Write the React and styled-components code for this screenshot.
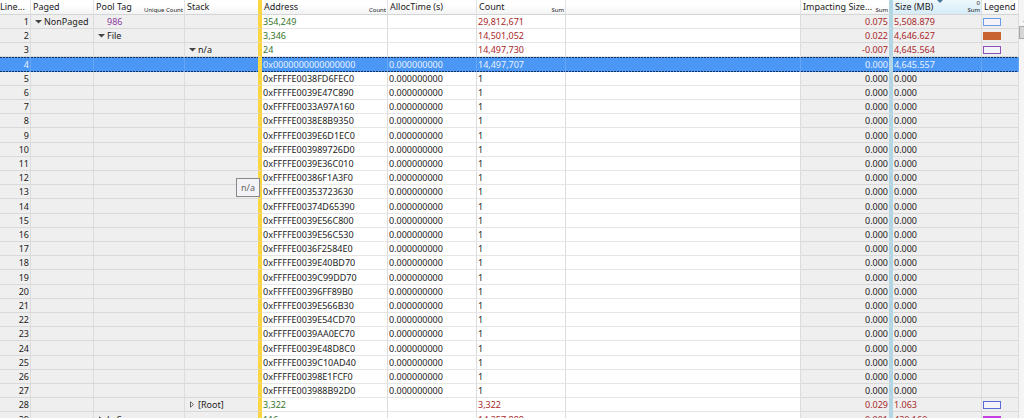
import styled, { createGlobalStyle } from 'styled-components'

const addresses = [
  '0xFFFFE0038FD6FEC0', '0xFFFFE0039E47C890', '0xFFFFE0033A97A160', '0xFFFFE0038E8B9350',
  '0xFFFFE0039E6D1EC0', '0xFFFFE003989726D0', '0xFFFFE0039E36C010', '0xFFFFE00386F1A3F0',
  '0xFFFFE00353723630', '0xFFFFE00374D65390', '0xFFFFE0039E56C800', '0xFFFFE0039E56C530',
  '0xFFFFE0036F2584E0', '0xFFFFE0039E40BD70', '0xFFFFE0039C99DD70', '0xFFFFE00396FF89B0',
  '0xFFFFE0039E566B30', '0xFFFFE0039E54CD70', '0xFFFFE0039AA0EC70', '0xFFFFE0039E48D8C0',
  '0xFFFFE0039C10AD40', '0xFFFFE00398E1FCF0', '0xFFFFE003988B92D0',
]

const rows = [
  { paged: 'NonPaged', open: true, uniqueTags: '986', address: '354,249', count: '29,812,671', impact: '0.075', size: '5,508.879', legend: '#6a9ce4', total: true },
  { pool: 'File', open: true, address: '3,346', count: '14,501,052', impact: '0.022', size: '4,646.627', legend: '#c8642f', filled: true, total: true },
  { stack: 'n/a', open: true, address: '24', count: '14,497,730', impact: '-0.007', size: '4,645.564', legend: '#8d52b8', total: true },
  { address: '0x0000000000000000', time: '0.000000000', count: '14,497,707', impact: '0.000', size: '4,645.557', selected: true },
  ...addresses.map((address) => ({ address, time: '0.000000000', count: '1', impact: '0.000', size: '0.000' })),
  { stack: '[Root]', address: '3,322', count: '3,322', impact: '0.029', size: '1.063', legend: '#596bd9', total: true },
  { pool: 'LeS', address: '116', count: '14,357,888', impact: '0.001', size: '430.160', legend: '#c23fe0', filled: true, total: true },
]

const TreeLabel = ({ open, children }) => (
  <Node>
    <Toggle type='button' aria-label={open ? 'Collapse' : 'Expand'} aria-expanded={!!open}>
      <svg width='7' height='7' viewBox='0 0 7 7'>
        {open
          ? <path d='M0 2h7L3.500 5.500z' fill='#444' />
          : <path d='M1.500 0.800v5.400L4.500 3.500z' fill='#fff' stroke='#555' strokeWidth='0.900' />}
      </svg>
    </Toggle>
    {children}
  </Node>
)

const Row = ({ row, line }) => (
  <Line $selected={row.selected} aria-selected={!!row.selected}>
    <Cell $shaded $right>{line}</Cell>
    <Cell $shaded>{row.paged && <TreeLabel open={row.open}>{row.paged}</TreeLabel>}</Cell>
    <Cell $shaded>
      {row.pool && <TreeLabel open={row.open}>{row.pool}</TreeLabel>}
      {row.uniqueTags && <Unique>{row.uniqueTags}</Unique>}
    </Cell>
    <Cell $shaded $bar='#fad643'>{row.stack && <TreeLabel open={row.open}>{row.stack}</TreeLabel>}</Cell>
    <Cell $color={row.total && '#35752a'}>{row.address}</Cell>
    <Cell>{row.time}</Cell>
    <Cell $color={row.total && '#a8282a'}>{row.count}</Cell>
    <Cell />
    <Cell $shaded $right $color={row.total && '#a8282a'} $bar='#b3d6e4'>{row.impact}</Cell>
    <Cell $shaded $color={row.total && '#a8282a'}>{row.size}</Cell>
    <Cell $shaded>{row.legend && <Swatch $color={row.legend} $filled={row.filled} />}</Cell>
  </Line>
)

const Heading = ({ title, note, order, ...rest }) => (
  <HeadCell scope='col' {...rest}>
    <HeadContent>
      <Title>{title}</Title>
      {note && <Note>{order && <span>{order}</span>}<span>{note}</span></Note>}
    </HeadContent>
    {rest.$sorted && <SortMark width='6' height='3' viewBox='0 0 6 3'><path d='M0 0h6L3 3z' fill='#47799a' /></SortMark>}
  </HeadCell>
)

const App = () => (
  <>
    <GlobalStyle />
    <Viewer>
      <Table>
        <colgroup>
          <Col $w={31} />
          <Col $w={63} />
          <Col $w={91} />
          <Col $w={77} />
          <Col $w={126} />
          <Col $w={89} />
          <Col $w={89} />
          <col />
          <Col $w={92} />
          <Col $w={89} />
          <Col $w={37} />
        </colgroup>
        <thead>
          <tr>
            <Heading title='Line...' $flush />
            <Heading title='Paged' />
            <Heading title='Pool Tag' note='Unique Count' />
            <Heading title='Stack' $bar='#fad643' />
            <Heading title='Address' note='Count' />
            <Heading title='AllocTime (s)' />
            <Heading title='Count' note='Sum' />
            <Heading title='' />
            <Heading title='Impacting Size...' note='Sum' $bar='#b3d6e4' />
            <Heading title='Size (MB)' note='Sum' order='0' $sorted />
            <Heading title='Legend' />
          </tr>
        </thead>
        <tbody>
          {rows.map((row, i) => <Row key={row.address} row={row} line={i + 1} />)}
        </tbody>
      </Table>
      <Scrollbar>
        <ScrollUp type='button' aria-label='Scroll up'>
          <svg width='8' height='4' viewBox='0 0 8 4'><path d='M0 4L4 0l4 4z' fill='#777' /></svg>
        </ScrollUp>
        <Thumb />
      </Scrollbar>
      <Tooltip role='tooltip'>n/a</Tooltip>
    </Viewer>
  </>
)
export default App

const GlobalStyle = createGlobalStyle`
  *{
    box-sizing: border-box;
  }
  body{
    margin: 0;
    overflow: hidden;
    background: #fff;
    color: #222;
    font-family: "Noto Sans", "Open Sans", sans-serif;
    font-size: 9px;
  }
`

const Viewer = styled.main`
  position: relative;
  display: flex;
  height: 100vh;
  overflow: hidden;
`

const Table = styled.table`
  flex: 1;
  min-width: 0;
  align-self: flex-start;
  table-layout: fixed;
  border-collapse: separate;
  border-spacing: 0;
`

const Col = styled.col`
  width: ${props => props.$w}px;
`

const HeadCell = styled.th`
  position: relative;
  height: 15px;
  padding: ${props => props.$flush ? '0' : '0 1px 0 2px'};
  background: ${props => props.$sorted ? 'linear-gradient(#eef8fd, #d5ecf7)' : 'linear-gradient(#fff 40%, #f2f3f4)'};
  border-bottom: 1px solid #d5d5d5;
  border-right: ${props => props.$bar ? `4px solid ${props.$bar}` : '1px solid #e2e2e2'};
  font-weight: 400;
  text-align: left;
`

const HeadContent = styled.div`
  display: flex;
  justify-content: space-between;
  height: 14px;
  line-height: 13px;
  white-space: nowrap;
`

const Title = styled.span`
  flex: none;
`

const Note = styled.span`
  display: flex;
  flex-direction: column;
  justify-content: flex-end;
  align-items: flex-end;
  font-size: 6px;
  line-height: 7px;
`

const SortMark = styled.svg`
  position: absolute;
  top: 0;
  left: 50%;
`

const Cell = styled.td`
  height: 14px;
  padding: 0 1px;
  overflow: hidden;
  line-height: 13px;
  white-space: nowrap;
  text-align: ${props => props.$right ? 'right' : 'left'};
  color: ${props => props.$color || 'inherit'};
  background: ${props => props.$shaded ? '#efefef' : '#fff'};
  border-bottom: 1px solid ${props => props.$shaded ? '#d9d9d9' : '#e6e6e6'};
  border-right: ${props => props.$bar ? `4px solid ${props.$bar}` : '1px solid #dcdcdc'};
`

/* every fifth line is a pixel taller */
const Line = styled.tr`
  color: ${props => props.$selected ? '#e8f2ff' : 'inherit'};
  &:nth-child(5n + 4) td{
    height: 15px;
    padding-top: 1px;
  }
  ${props => props.$selected && `
    td{
      border-bottom: 0;
      padding-bottom: 1px;
      background:
        repeating-linear-gradient(90deg, #16325a 0 2px, #4b97f5 2px 3px) top / 100% 1px no-repeat,
        repeating-linear-gradient(90deg, #16325a 0 2px, #4b97f5 2px 3px) bottom / 100% 1px no-repeat,
        #4b97f5;
    }
    td:not(:nth-child(4)):not(:nth-child(9)){
      border-right-color: #66a6f6;
    }
  `}
`

const Node = styled.span`
  display: flex;
  align-items: center;
  gap: 2px;
  padding-left: 3px;
`

const Toggle = styled.button`
  display: flex;
  padding: 0;
  border: 0;
  background: none;
`

const Unique = styled.span`
  padding-left: 12px;
  color: #8b3a9c;
`

const Swatch = styled.span`
  display: block;
  width: 18px;
  height: 8px;
  border: 1px solid ${props => props.$color};
  background: ${props => props.$filled ? props.$color : '#f4f4f8'};
`

const Scrollbar = styled.div`
  flex: none;
  width: 5px;
  padding-top: 14px;
  overflow: hidden;
  background: #f5f5f5;
`

const ScrollUp = styled.button`
  display: flex;
  align-items: center;
  width: 16px;
  height: 12px;
  padding: 0 4px;
  border: 0;
  background: none;
`

const Thumb = styled.div`
  width: 16px;
  height: 13px;
  border: 1px solid #a6a6a6;
  background: #d6d6d6;
`

const Tooltip = styled.div`
  position: absolute;
  top: 178px;
  left: 236px;
  padding: 2px 4px;
  border: 1px solid #888;
  background: #f2f2f7;
  color: #666;
  line-height: 13px;
`
